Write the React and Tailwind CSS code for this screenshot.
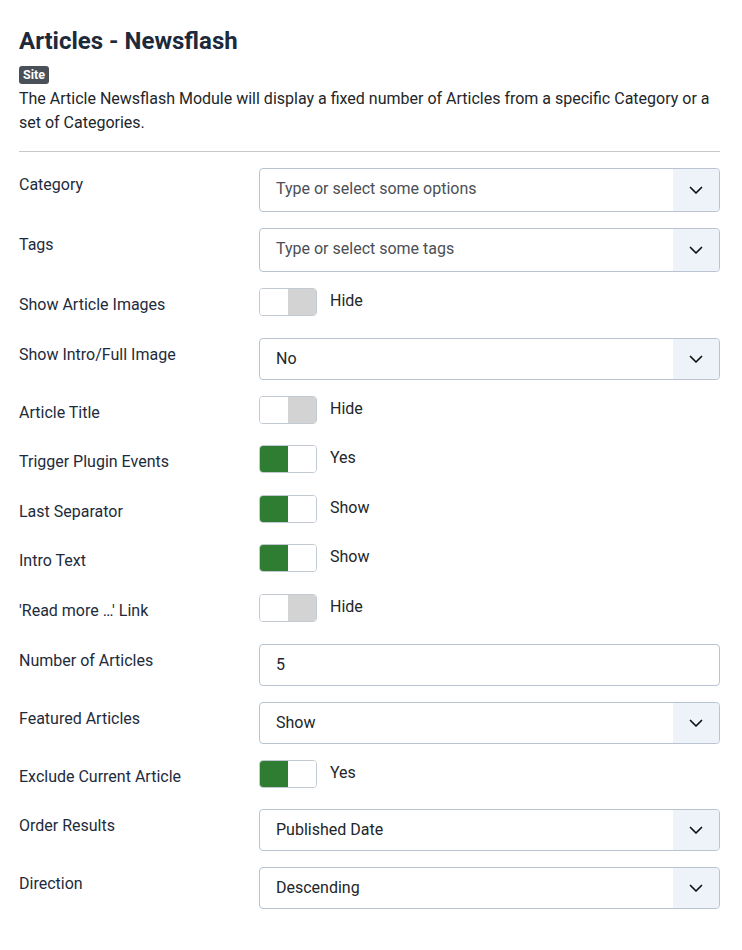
import React from 'react';

const Chevron = () => (
  <svg width="16" height="16" viewBox="0 0 16 16" fill="none" stroke="#111" strokeWidth="1.7" strokeLinecap="round" strokeLinejoin="round">
    <path d="M2.5 5.5l5.5 5.5 5.5-5.5" />
  </svg>
);

const Select = ({ value, placeholder, tall = false }) => (
  <div className={`flex w-full items-stretch rounded-[4px] border border-[#b9c4d0] bg-white ${tall ? 'h-[44px]' : 'h-[42px]'}`}>
    <div className={`flex flex-1 items-center pl-4 ${tall ? 'pb-[3px]' : ''} ${placeholder ? 'text-[#4b4f55]' : 'text-[#22262a]'}`}>
      {value || placeholder}
    </div>
    <div className="flex w-[46px] items-center justify-center rounded-r-[4px] bg-[#eef2f9]">
      <Chevron />
    </div>
  </div>
);

const Input = ({ value }) => (
  <div className="flex h-[42px] w-full items-center rounded-[4px] border border-[#b9c4d0] bg-white pl-4 text-[#22262a]">
    {value}
  </div>
);

const Toggle = ({ on, text }) => (
  <div className="flex h-[33.6px] items-start">
    <div className="flex h-[28px] w-[58px] overflow-hidden rounded-[4px] border border-[#c3c9d0]">
      <div className={`flex-1 ${on ? 'bg-[#2f7d32]' : 'bg-white'}`} />
      <div className={`flex-1 ${on ? 'bg-white' : 'bg-[#d3d3d3]'}`} />
    </div>
    <span className="ml-[13px] leading-[26px] text-[#22262a]">{text}</span>
  </div>
);

const Row = ({ label, children }) => (
  <div className="mb-4 flex">
    <div className="w-[240px] shrink-0 pt-[5px] leading-6 text-[#1e2b3c]">{label}</div>
    <div className="flex-1">{children}</div>
  </div>
);

export default function App() {
  return (
    <div className="min-h-[950px] bg-white pl-[19px] pr-[22px] pt-[26px] text-base font-['Roboto','Liberation_Sans',sans-serif]">
      <h1 className="text-[24px] font-bold leading-[30px] text-[#1d2a3b]">Articles - Newsflash</h1>
      <span className="mt-[10px] inline-block rounded-[3px] bg-[#4a5058] px-[4px] text-[12.5px] font-bold leading-[18px] text-white">Site</span>
      <p className="mt-[1px] leading-6 text-[#22262a]">
        The Article Newsflash Module will display a fixed number of Articles from a specific Category or a set of Categories.
      </p>
      <hr className="mt-4 mb-4 border-t border-[#c8c8c8]" />

      <Row label="Category"><Select tall placeholder="Type or select some options" /></Row>
      <Row label="Tags"><Select tall placeholder="Type or select some tags" /></Row>
      <Row label="Show Article Images"><Toggle text="Hide" /></Row>
      <Row label="Show Intro/Full Image"><Select value="No" /></Row>
      <Row label="Article Title"><Toggle text="Hide" /></Row>
      <Row label="Trigger Plugin Events"><Toggle on text="Yes" /></Row>
      <Row label="Last Separator"><Toggle on text="Show" /></Row>
      <Row label="Intro Text"><Toggle on text="Show" /></Row>
      <Row label="'Read more …' Link"><Toggle text="Hide" /></Row>
      <Row label="Number of Articles"><Input value="5" /></Row>
      <Row label="Featured Articles"><Select value="Show" /></Row>
      <Row label="Exclude Current Article"><Toggle on text="Yes" /></Row>
      <Row label="Order Results"><Select value="Published Date" /></Row>
      <Row label="Direction"><Select value="Descending" /></Row>
    </div>
  );
}
